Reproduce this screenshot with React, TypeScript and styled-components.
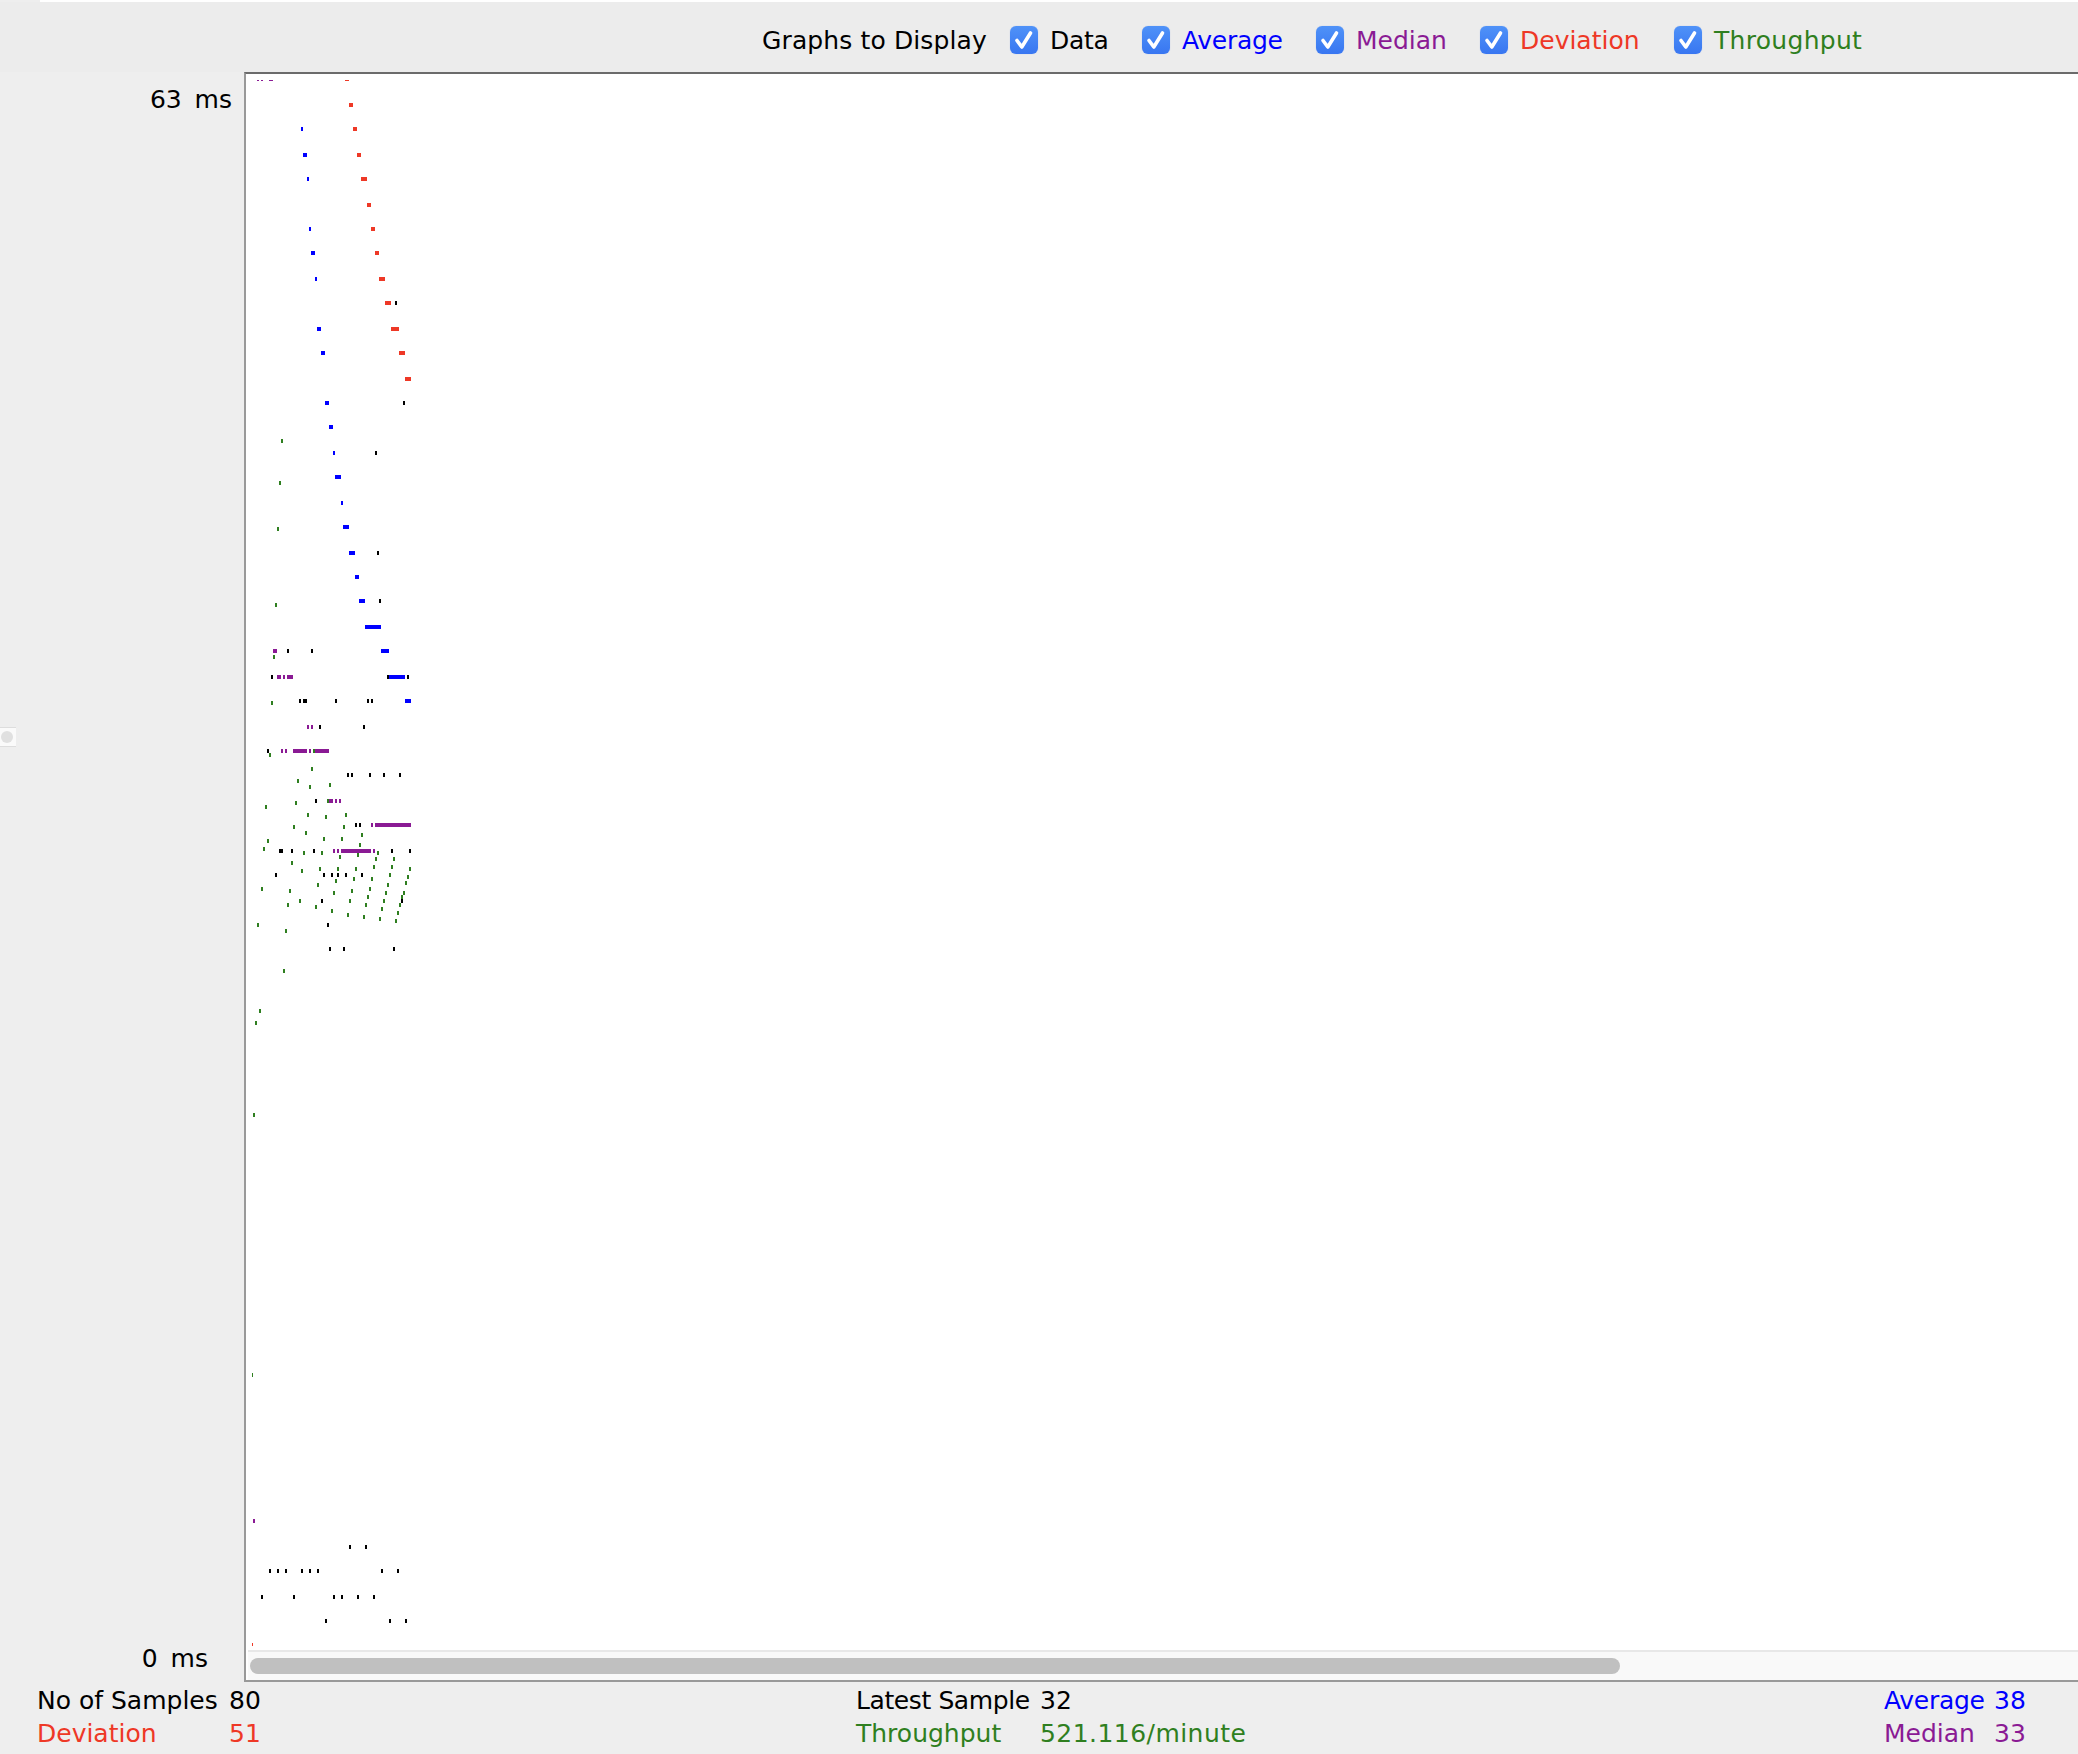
import styled, { createGlobalStyle } from 'styled-components';

const BLACK = '#000000';
const BLUE = '#0000ff';
const PURPLE = '#8a1a94';
const RED = '#ee3826';
const GREEN = '#2f7f20';

const GlobalStyle = createGlobalStyle`
  html, body {
    margin: 0;
    padding: 0;
    background: #eeeeee;
  }
  body {
    font-family: "DejaVu Sans", "Liberation Sans", sans-serif;
  }
`;

// [x, y, width, height] in page pixels, read off the reference
type Mark = [number, number, number, number?];

const dataMarks: Mark[] = [
  [395, 301, 2], [403, 401, 2], [375, 451, 2], [377, 551, 2], [379, 599, 2],
  [287, 649, 2], [311, 649, 2], [271, 675, 2], [387, 675, 2], [407, 675, 2],
  [299, 699, 2], [303, 699, 4], [335, 699, 2], [367, 699, 2], [371, 699, 2],
  [319, 725, 2], [363, 725, 2], [267, 749, 2], [347, 773, 2], [351, 773, 2],
  [369, 773, 2], [383, 773, 2], [399, 773, 2], [315, 799, 2], [355, 823, 2],
  [359, 823, 2], [279, 849, 4], [291, 849, 2], [313, 849, 2], [391, 849, 2],
  [409, 849, 2], [275, 873, 2], [323, 873, 2], [331, 873, 2], [337, 873, 2],
  [345, 873, 2], [361, 873, 2], [321, 899, 2], [401, 899, 2], [327, 923, 2],
  [329, 947, 2], [343, 947, 2], [393, 947, 2], [349, 1545, 2], [365, 1545, 2],
  [269, 1569, 2], [277, 1569, 2], [285, 1569, 2], [301, 1569, 2], [309, 1569, 2],
  [317, 1569, 2], [381, 1569, 2], [397, 1569, 2], [261, 1595, 2], [293, 1595, 2],
  [333, 1595, 2], [341, 1595, 2], [357, 1595, 2], [373, 1595, 2], [325, 1619, 2],
  [389, 1619, 2], [405, 1619, 2],
];

const averageMarks: Mark[] = [
  [301, 127, 2], [303, 153, 4], [307, 177, 2], [309, 227, 2], [311, 251, 4],
  [315, 277, 2], [317, 327, 4], [321, 351, 4], [325, 401, 4], [329, 425, 4],
  [333, 451, 2], [335, 475, 6], [341, 501, 2], [343, 525, 6], [349, 551, 6],
  [355, 575, 4], [359, 599, 6], [365, 625, 16], [381, 649, 8], [389, 675, 16],
  [405, 699, 6],
];

const medianMarks: Mark[] = [
  [257, 80, 2, 1], [261, 80, 2, 1], [269, 80, 4, 1], [273, 649, 4], [277, 675, 4],
  [283, 675, 2], [287, 675, 6], [307, 725, 2], [311, 725, 2], [281, 749, 2],
  [285, 749, 2], [293, 749, 14], [309, 749, 2], [315, 749, 14], [329, 799, 4],
  [335, 799, 2], [339, 799, 2], [371, 823, 2], [375, 823, 36], [333, 849, 2],
  [337, 849, 2], [341, 849, 30], [373, 849, 2], [253, 1519, 2],
];

const deviationMarks: Mark[] = [
  [345, 80, 4, 1], [349, 103, 4], [353, 127, 4], [357, 153, 4], [361, 177, 6],
  [367, 203, 4], [371, 227, 4], [375, 251, 4], [379, 277, 6], [385, 301, 6],
  [391, 327, 8], [399, 351, 6], [405, 377, 6], [252, 1643, 1, 3],
];

const throughputMarks: Mark[] = [
  [281, 439, 2], [279, 481, 2], [277, 527, 2], [275, 603, 2], [273, 655, 2],
  [271, 701, 2], [313, 749, 2], [269, 753, 2], [311, 767, 2], [297, 779, 2],
  [329, 783, 2], [309, 785, 2], [327, 799, 2], [295, 801, 2], [265, 805, 2],
  [307, 813, 2], [345, 813, 2], [325, 815, 2], [293, 825, 2], [343, 825, 2],
  [305, 831, 2], [361, 833, 2], [323, 837, 2], [341, 837, 2], [267, 839, 2],
  [359, 843, 2], [263, 847, 2], [303, 851, 2], [321, 851, 2], [377, 851, 2],
  [357, 853, 2], [339, 855, 2], [375, 857, 2], [393, 857, 2], [291, 861, 2],
  [373, 865, 2], [391, 865, 2], [319, 867, 2], [337, 867, 2], [355, 867, 2],
  [409, 867, 2], [301, 869, 2], [389, 873, 2], [407, 875, 2], [353, 877, 2],
  [371, 877, 2], [335, 879, 2], [405, 881, 2], [317, 883, 2], [387, 883, 2],
  [261, 887, 2], [369, 887, 2], [289, 889, 2], [351, 889, 2], [333, 891, 2],
  [385, 891, 2], [403, 891, 2], [367, 895, 2], [401, 895, 2], [299, 899, 2],
  [349, 899, 2], [383, 899, 2], [287, 903, 2], [365, 903, 2], [399, 903, 2],
  [315, 905, 2], [381, 907, 2], [331, 909, 2], [397, 911, 2], [347, 913, 2],
  [363, 915, 2], [379, 917, 2], [395, 919, 2], [257, 923, 2], [285, 929, 2],
  [283, 969, 2], [259, 1009, 2], [255, 1021, 2], [253, 1113, 2], [252, 1373, 1],
];

const series: { color: string; marks: Mark[] }[] = [
  { color: BLACK, marks: dataMarks },
  { color: BLUE, marks: averageMarks },
  { color: PURPLE, marks: medianMarks },
  { color: RED, marks: deviationMarks },
  { color: GREEN, marks: throughputMarks },
];

const graphOptions = [
  { label: 'Data', color: BLACK, width: 132, spacing: -0.3 },
  { label: 'Average', color: BLUE, width: 174, spacing: -0.3 },
  { label: 'Median', color: PURPLE, width: 164, spacing: 0 },
  { label: 'Deviation', color: RED, width: 194, spacing: 0 },
  { label: 'Throughput', color: GREEN, width: 190, spacing: 0.3 },
];

function CheckMark() {
  return (
    <svg width="28" height="28" viewBox="0 0 28 28">
      <path d="M7 14.5 L11.8 21 L20.5 7" fill="none" stroke="#fff" strokeWidth="3.6" strokeLinecap="round" strokeLinejoin="round" />
    </svg>
  );
}

function App() {
  return (
    <>
      <GlobalStyle />
      <Page>
        <TopEdge />
        <Toolbar>
          <ToolbarTitle>Graphs to Display</ToolbarTitle>
          {graphOptions.map((option) => (
            <Option key={option.label} $width={option.width}>
              <Checkbox>
                <CheckMark />
              </Checkbox>
              <OptionLabel $color={option.color} $spacing={option.spacing}>
                {option.label}
              </OptionLabel>
            </Option>
          ))}
        </Toolbar>
        <Body>
          <YAxis>
            <AxisLabel $inset={12}>63&nbsp; ms</AxisLabel>
            <AxisLabel $inset={36}>0&nbsp; ms</AxisLabel>
          </YAxis>
          <Chart>
            <Plot>
              <svg width="1830" height="1576" viewBox="246 74 1830 1576" shapeRendering="crispEdges">
                {series.map((s) => (
                  <g key={s.color} fill={s.color}>
                    {s.marks.map(([x, y, w, h = 4]) => (
                      <rect key={`${x}-${y}`} x={x} y={y} width={w} height={h} />
                    ))}
                  </g>
                ))}
              </svg>
            </Plot>
            <ScrollTrack>
              <ScrollThumb />
            </ScrollTrack>
          </Chart>
        </Body>
        <Footer>
          <StatColumn $width={819}>
            <StatRow $color={BLACK}>
              <StatName $width={192}>No of Samples</StatName>
              <span>80</span>
            </StatRow>
            <StatRow $color={RED}>
              <StatName $width={192}>Deviation</StatName>
              <span>51</span>
            </StatRow>
          </StatColumn>
          <StatColumn $width={1028}>
            <StatRow $color={BLACK}>
              <StatName $width={184} $spacing={-0.4}>Latest Sample</StatName>
              <span>32</span>
            </StatRow>
            <StatRow $color={GREEN}>
              <StatName $width={184}>Throughput</StatName>
              <StatValue $spacing={0.45}>521.116/minute</StatValue>
            </StatRow>
          </StatColumn>
          <StatColumn $width={194}>
            <StatRow $color={BLUE}>
              <StatName $width={110} $spacing={-0.3}>Average</StatName>
              <span>38</span>
            </StatRow>
            <StatRow $color={PURPLE}>
              <StatName $width={110}>Median</StatName>
              <span>33</span>
            </StatRow>
          </StatColumn>
        </Footer>
        <SideHandle>
          <HandleDot />
        </SideHandle>
      </Page>
    </>
  );
}

const Page = styled.div`
  position: relative;
  width: 2078px;
  height: 1754px;
  overflow: hidden;
  background: #eeeeee;
  color: #000;
  font-size: 25px;
`;

const TopEdge = styled.div`
  height: 2px;
  margin-left: 40px;
  background: #ffffff;
`;

const Toolbar = styled.div`
  display: flex;
  align-items: center;
  height: 70px;
  padding: 6px 0 0 762px;
  box-sizing: border-box;
  background: #ececec;
`;

const ToolbarTitle = styled.span`
  width: 248px;
  flex: none;
  letter-spacing: 0.12px;
  white-space: nowrap;
`;

const Option = styled.label<{ $width: number }>`
  display: flex;
  align-items: center;
  gap: 12px;
  width: ${(p) => p.$width}px;
  flex: none;
`;

const Checkbox = styled.span`
  display: block;
  width: 28px;
  height: 28px;
  flex: none;
  border-radius: 6px;
  background: linear-gradient(#4f92f8, #3876f1);
  box-shadow: 0 0 1px rgba(56, 118, 241, 0.4);

  svg {
    display: block;
  }
`;

const OptionLabel = styled.span<{ $color: string; $spacing: number }>`
  color: ${(p) => p.$color};
  letter-spacing: ${(p) => p.$spacing}px;
  white-space: nowrap;
`;

const Body = styled.div`
  display: flex;
  height: 1612px;
`;

const YAxis = styled.div`
  display: flex;
  flex-direction: column;
  justify-content: space-between;
  align-items: flex-end;
  width: 244px;
  flex: none;
  padding: 13px 0 11px;
  box-sizing: border-box;
`;

const AxisLabel = styled.span<{ $inset: number }>`
  margin-right: ${(p) => p.$inset}px;
  word-spacing: -1.5px;
  white-space: nowrap;
`;

const Chart = styled.div`
  flex: 1;
  display: flex;
  flex-direction: column;
  box-sizing: border-box;
  height: 1610px;
  border-top: 2px solid #6b6b6b;
  border-left: 2px solid #999999;
  border-bottom: 2px solid #999999;
  background: #ffffff;
`;

const Plot = styled.div`
  height: 1576px;
  flex: none;
  svg {
    display: block;
  }
`;

const ScrollTrack = styled.div`
  flex: 1;
  margin-left: 2px;
  padding: 6px 0 0 2px;
  box-sizing: border-box;
  border-top: 2px solid #e8e8e8;
  background: #f9f9f9;
`;

const ScrollThumb = styled.div`
  width: 1370px;
  height: 16px;
  border-radius: 8px;
  background: #c0c0c0;
`;

const Footer = styled.div`
  display: flex;
  padding-left: 37px;
`;

const StatColumn = styled.div<{ $width: number }>`
  display: flex;
  flex-direction: column;
  width: ${(p) => p.$width}px;
  flex: none;
`;

const StatRow = styled.div<{ $color: string }>`
  display: flex;
  height: 33px;
  line-height: 33px;
  color: ${(p) => p.$color};
  white-space: nowrap;
`;

const StatName = styled.span<{ $width: number; $spacing?: number }>`
  width: ${(p) => p.$width}px;
  flex: none;
  letter-spacing: ${(p) => p.$spacing ?? 0}px;
`;

const StatValue = styled.span<{ $spacing: number }>`
  letter-spacing: ${(p) => p.$spacing}px;
`;

const SideHandle = styled.div`
  position: absolute;
  left: 0;
  top: 727px;
  width: 16px;
  height: 20px;
  display: flex;
  align-items: center;
  padding-left: 1px;
  box-sizing: border-box;
  background: #fafafa;
  border-top: 1px solid #dddddd;
  border-bottom: 1px solid #dddddd;
`;

const HandleDot = styled.div`
  width: 12px;
  height: 12px;
  border-radius: 50%;
  background: #e0e0e0;
`;

export default App;
